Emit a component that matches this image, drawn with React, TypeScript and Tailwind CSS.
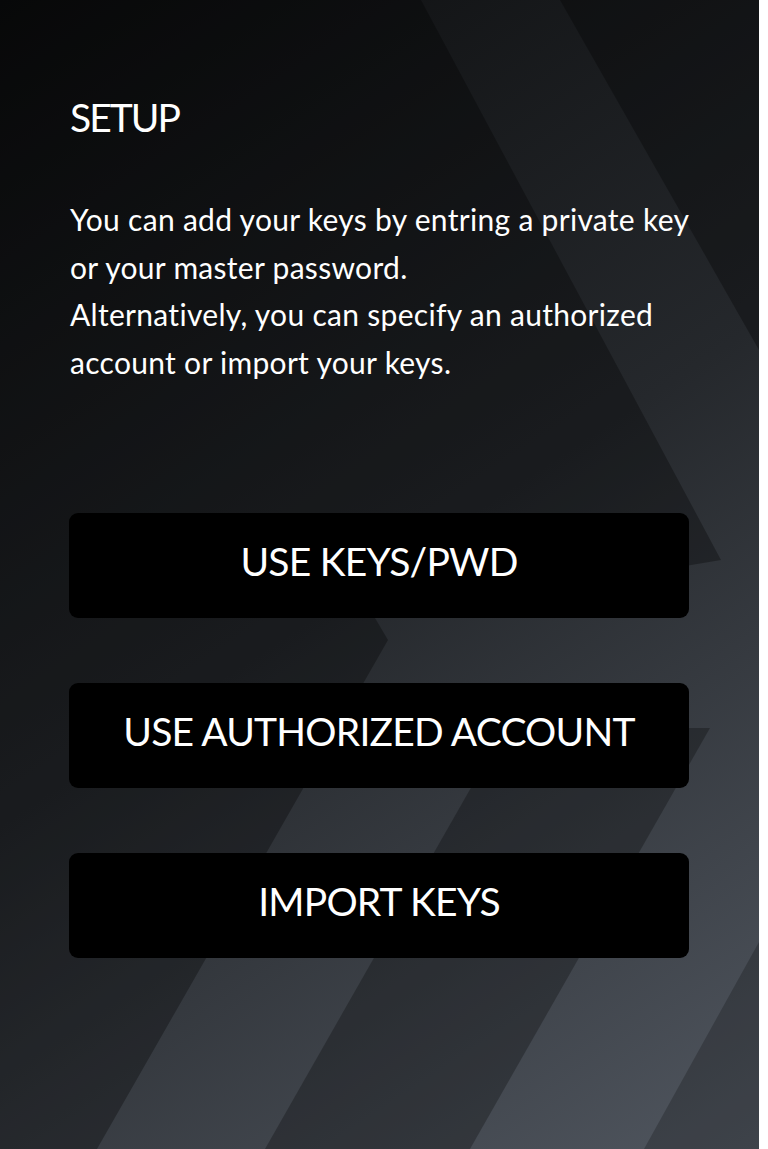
import React from "react";

function Background() {
  return (
    <svg
      className="absolute inset-0 h-full w-full"
      viewBox="0 0 759 1149"
      preserveAspectRatio="none"
      aria-hidden="true"
    >
      <defs>
        <linearGradient id="base" gradientUnits="userSpaceOnUse" x1="0" y1="0" x2="759" y2="1149">
          <stop offset="0" stopColor="#0b0c0d" />
          <stop offset="0.5" stopColor="#25282c" />
          <stop offset="1" stopColor="#50565f" />
        </linearGradient>
      </defs>
      <rect x="0" y="0" width="759" height="1149" fill="url(#base)" />
      {/* big dark chevron region, top-left */}
      <polygon
        points="0,0 421,0 721,560 375,618 388,640 97,1149 0,1149"
        fill="#000"
        fillOpacity="0.3"
      />
      {/* dark top-right wedge */}
      <polygon points="560,0 759,0 759,350" fill="#000" fillOpacity="0.3" />
      {/* dark lower parallelogram */}
      <polygon points="265,1149 470,1149 710,728 505,728" fill="#000" fillOpacity="0.27" />
      {/* dark lower-right band */}
      <polygon points="644,1149 759,1149 759,942" fill="#000" fillOpacity="0.22" />
    </svg>
  );
}

function SetupButton({ label }: { label: string }) {
  return (
    <button
      type="button"
      className="flex h-[105px] w-[620px] items-center justify-center rounded-[9px] bg-black pb-[9px] text-[39px] font-normal uppercase leading-[47px] tracking-[-0.02em] text-white"
    >
      {label}
    </button>
  );
}

export default function App() {
  return (
    <div className="min-h-[1149px] w-full bg-white">
      <div className="relative h-[1149px] w-[759px] overflow-hidden bg-[#0c0d0e] font-[Lato,sans-serif] text-white">
        <Background />
        <div className="relative px-[70px] pt-[94px]">
          <h1 className="text-[39px] font-normal leading-[47px] tracking-[-0.05em]">SETUP</h1>
          <p className="mt-[55px] whitespace-nowrap text-[30px] leading-[47.5px] tracking-[0.01em]">
            You can add your keys by entring a private key
            <br />
            or your master password.
            <br />
            Alternatively, you can specify an authorized
            <br />
            account or import your keys.
          </p>
          <div className="-ml-px mt-[127px] flex flex-col gap-[65px]">
            <SetupButton label="USE KEYS/PWD" />
            <SetupButton label="USE AUTHORIZED ACCOUNT" />
            <SetupButton label="IMPORT KEYS" />
          </div>
        </div>
      </div>
    </div>
  );
}
